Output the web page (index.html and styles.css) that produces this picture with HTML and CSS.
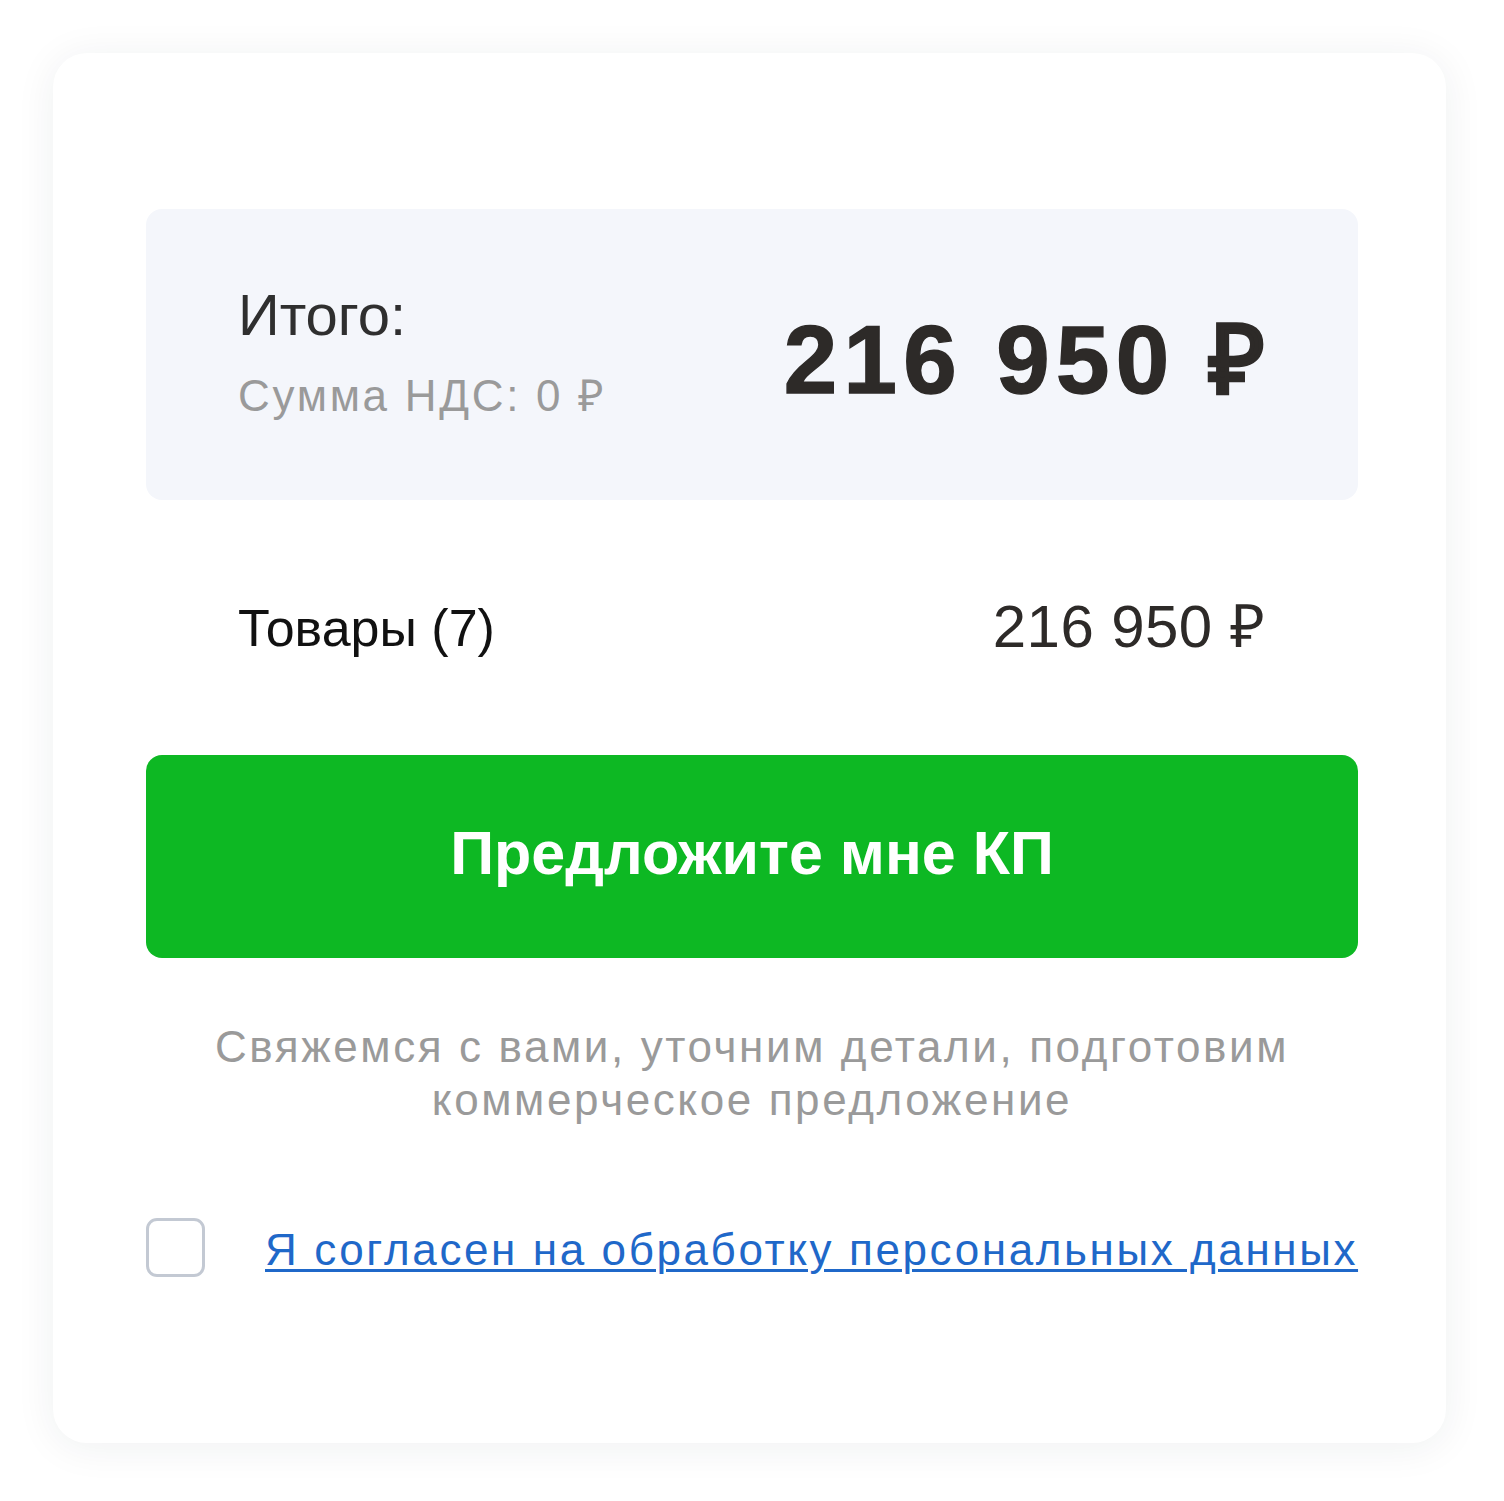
FILE: index.html
```html
<!DOCTYPE html>
<html lang="ru">
<head>
<meta charset="utf-8">
<link rel="stylesheet" href="styles.css">
</head>
<body>
<div class="card">
  <div class="total">
    <div class="total-left">
      <div class="total-label">Итого:</div>
      <div class="vat">Сумма НДС: 0 ₽</div>
    </div>
    <div class="total-sum">216 950 ₽</div>
  </div>
  <div class="row">
    <div class="row-label">Товары (7)</div>
    <div class="row-sum">216 950 ₽</div>
  </div>
  <button class="cta">Предложите мне КП</button>
  <p class="note">Свяжемся с вами, уточним детали, подготовим<br>коммерческое предложение</p>
  <label class="agree">
    <span class="box"></span>
    <a class="agree-link" href="#">Я согласен на обработку персональных данных</a>
  </label>
</div>
</body>
</html>
```

FILE: styles.css
```css
html, body {
  margin: 0;
  padding: 0;
  background: #ffffff;
}
body {
  font-family: "Liberation Sans", Arial, sans-serif;
  padding: 53px 58px 58px 53px;
}
.card {
  width: 1393px;
  height: 1390px;
  box-sizing: border-box;
  background: #fff;
  border-radius: 34px;
  box-shadow: 0 4px 40px rgba(30, 40, 60, 0.07);
  padding: 156px 88px 0 93px;
}
.total {
  background: #f4f6fb;
  border-radius: 16px;
  height: 291px;
  box-sizing: border-box;
  padding: 0 93px 0 92px;
  display: flex;
  align-items: center;
  justify-content: space-between;
}
.total-left {
  display: flex;
  flex-direction: column;
  margin-top: 2px;
}
.total-label {
  font-size: 58px;
  line-height: 64px;
  color: #2f2f2f;
  margin-top: -2px;
}
.vat {
  font-size: 44px;
  line-height: 60px;
  margin-top: 19px;
  color: #9a9a9a;
  letter-spacing: 2.7px;
}
.total-sum {
  font-size: 96px;
  font-weight: bold;
  color: #2d2a28;
  letter-spacing: 6.4px;
  margin-right: -6px;
  -webkit-text-stroke: 1.4px #2d2a28;
  margin-top: 2px;
  white-space: nowrap;
}
.row {
  display: flex;
  justify-content: space-between;
  align-items: center;
  padding: 0 93px 0 92px;
  height: 255px;
}
.row-label {
  font-size: 52px;
  color: #111;
  margin-top: 0;
}
.row-sum {
  font-size: 60px;
  letter-spacing: 0.4px;
  color: #2d2a28;
  margin-top: -8px;
}
.cta {
  display: block;
  width: 100%;
  height: 203px;
  border: none;
  border-radius: 16px;
  background: #0db823;
  color: #fff;
  font-family: "Liberation Sans", Arial, sans-serif;
  font-weight: bold;
  font-size: 61px;
  letter-spacing: 0;
  padding: 0 0 8px;
  cursor: pointer;
}
.note {
  margin: 62px 0 0;
  text-align: center;
  color: #9a9a9a;
  font-size: 44px;
  line-height: 53px;
  letter-spacing: 2.6px;
}
.agree {
  display: flex;
  align-items: center;
  gap: 60px;
  margin-top: 92px;
}
.box {
  width: 59px;
  height: 59px;
  box-sizing: border-box;
  border: 3px solid #c3c9d3;
  border-radius: 11px;
  flex: none;
}
.agree-link {
  color: #1f68c9;
  font-size: 44px;
  letter-spacing: 2.6px;
  white-space: nowrap;
  text-decoration: underline;
  text-underline-offset: 4px;
  text-decoration-thickness: 3px;
  margin-top: 4px;
}
```
